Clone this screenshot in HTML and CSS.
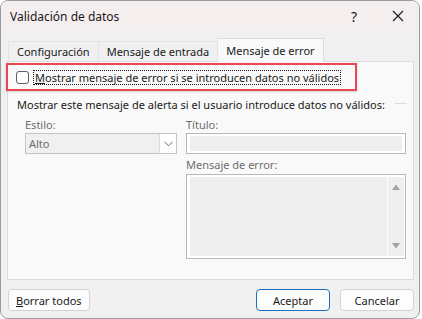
FILE: index.html
```html
<!DOCTYPE html>
<html lang="es">
<head>
    <meta charset="UTF-8">
    <title>Validación de datos</title>
    <link rel="stylesheet" href="styles.css">
</head>
<body>
    <div class="dialog">
        <div class="titlebar">
            <span class="title">Validación de datos</span>
            <div class="title-actions">
                <span class="help">?</span>
                <span class="close">
                    <svg width="12" height="12" viewBox="0 0 12 12"><path d="M1 1L11 11M11 1L1 11" stroke="#1a1a1a" stroke-width="1.1"/></svg>
                </span>
            </div>
        </div>

        <div class="content">
            <div class="tabs">
                <div class="tab">Configuración</div>
                <div class="tab">Mensaje de entrada</div>
                <div class="tab active">Mensaje de error</div>
            </div>

            <div class="panel">
                <div class="check-row">
                    <span class="checkbox"></span>
                    <span class="check-label"><u>M</u>ostrar mensaje de error si se introducen datos no válidos</span>
                </div>

                <div class="group-head">
                    <span>Mostrar este mensaje de alerta si el usuario introduce datos no válidos:</span>
                    <span class="group-line"></span>
                </div>

                <div class="fields">
                    <div class="field">
                        <label class="field-label">Estilo:</label>
                        <div class="combo">
                            <span class="combo-value">Alto</span>
                            <span class="combo-btn">
                                <svg width="9" height="6" viewBox="0 0 9 6"><path d="M0.5 0.8L4.5 4.8L8.5 0.8" fill="none" stroke="#6a6a6a" stroke-width="1"/></svg>
                            </span>
                        </div>
                    </div>
                    <div class="field">
                        <label class="field-label">Título:</label>
                        <div class="input"><span class="input-fill"></span></div>

                        <label class="field-label second">Mensaje de error:</label>
                        <div class="textarea">
                            <span class="textarea-fill"></span>
                            <span class="scrollbar">
                                <svg width="8" height="6" viewBox="0 0 8 6"><path d="M0 6L4 0.5L8 6Z" fill="#a3a3a3"/></svg>
                                <svg width="8" height="6" viewBox="0 0 8 6"><path d="M0 0L4 5.5L8 0Z" fill="#a3a3a3"/></svg>
                            </span>
                        </div>
                    </div>
                </div>
            </div>

            <div class="buttons">
                <button class="btn"><u>B</u>orrar todos</button>
                <span class="spacer"></span>
                <button class="btn primary">Aceptar</button>
                <button class="btn">Cancelar</button>
            </div>
        </div>
    </div>
</body>
</html>
```

FILE: styles.css
```css
body {
    margin: 0;
    background-color: #ffffff;
    font-family: "Segoe UI", "Noto Sans", sans-serif;
    font-size: 11px;
    color: #1a1a1a;
}
.dialog {
    width: 420px;
    height: 319px;
    box-sizing: border-box;
    border: 1px solid #9c9c9c;
    border-radius: 8px;
    background-color: #f0f0f0;
    overflow: hidden;
    display: flex;
    flex-direction: column;
}
.titlebar {
    height: 30px;
    flex: none;
    background-color: #f4eeef;
    display: flex;
    align-items: center;
    padding-left: 9px;
}
.title {
    font-size: 12px;
}
.title-actions {
    margin-left: auto;
    display: flex;
    align-items: center;
    height: 100%;
}
.help,
.close {
    display: flex;
    align-items: center;
    justify-content: center;
    height: 100%;
}
.help {
    width: 46px;
    font-size: 14px;
}
.close {
    width: 42px;
}
.content {
    padding: 7px 5px 0 6px;
    flex: 1;
    display: flex;
    flex-direction: column;
}
.tabs {
    display: flex;
    align-items: flex-end;
    height: 23px;
    position: relative;
    z-index: 1;
    margin-left: 1px;
}
.tab {
    height: 20px;
    box-sizing: border-box;
    padding: 0 8px;
    display: flex;
    align-items: center;
    border: 1px solid #e3e3e3;
    border-bottom: none;
    border-left: none;
    background-color: #f0f0f0;
}
.tab:first-child {
    border-left: 1px solid #e3e3e3;
}
.tab.active {
    height: 24px;
    margin-bottom: -1px;
    background-color: #f9f9f9;
    border-color: #dcdcdc;
    padding: 0 8px;
}
.panel {
    height: 219px;
    box-sizing: border-box;
    border: 1px solid #dcdcdc;
    background-color: #f9f9f9;
}
.check-row {
    margin: 1px 0 0 -2px;
    width: 351px;
    height: 28px;
    box-sizing: border-box;
    border: 2px solid #ea4850;
    display: flex;
    align-items: center;
    padding-left: 8px;
    gap: 4px;
    box-shadow: 0 1px 2px rgba(0, 0, 0, 0.15);
}
.checkbox {
    width: 13px;
    height: 13px;
    box-sizing: border-box;
    border: 1px solid #5f5f5f;
    border-radius: 3px;
    background-color: #ffffff;
}
.check-label {
    border: 1px dotted #1a1a1a;
    padding: 0 1px;
    line-height: 13px;
}
.group-head {
    display: flex;
    align-items: center;
    height: 16px;
    margin-top: 5px;
    padding: 0 6px 0 9px;
}
.group-line {
    flex: 1;
    height: 1px;
    margin-left: 10px;
    margin-top: -2px;
    background-color: #dcdcdc;
}
.fields {
    display: grid;
    grid-template-columns: 152px 220px;
    column-gap: 9px;
    padding: 5px 0 0 17px;
}
.field {
    display: flex;
    flex-direction: column;
}
.field-label {
    height: 16px;
    line-height: 16px;
    color: #6d6d6d;
}
.field-label.second {
    margin-top: 3px;
    height: 17px;
}
.combo {
    height: 21px;
    box-sizing: border-box;
    border: 1px solid #c4c4c4;
    background-color: #f0f0f0;
    display: flex;
    align-items: stretch;
}
.combo-value {
    flex: 1;
    padding-left: 3px;
    display: flex;
    align-items: center;
    color: #6d6d6d;
}
.combo-btn {
    width: 16px;
    background-color: #ffffff;
    border-left: 1px solid #dadada;
    display: flex;
    align-items: center;
    justify-content: center;
}
.input {
    height: 21px;
    box-sizing: border-box;
    border: 1px solid #b9b9b9;
    background-color: #ffffff;
    padding: 2px 3px;
    display: flex;
}
.input-fill {
    flex: 1;
    background-color: #efefef;
}
.textarea {
    height: 85px;
    box-sizing: border-box;
    border: 1px solid #b9b9b9;
    background-color: #ffffff;
    padding: 2px 1px 2px 3px;
    display: flex;
    gap: 1px;
}
.textarea-fill {
    flex: 1;
    background-color: #efefef;
}
.scrollbar {
    width: 16px;
    background-color: #efefef;
    display: flex;
    flex-direction: column;
    align-items: center;
    justify-content: space-between;
    padding: 7px 0 7px;
}
.buttons {
    display: flex;
    gap: 10px;
    margin-top: 9px;
    padding-left: 1px;
}
.spacer {
    flex: 1;
}
.btn {
    height: 22px;
    min-width: 74px;
    padding: 0 7px;
    border: 1px solid #d3d3d3;
    border-radius: 4px;
    background-color: #fdfdfd;
    font-family: inherit;
    font-size: 11px;
    color: #1a1a1a;
}
.btn.primary {
    border-color: #1a6fc0;
}
```
